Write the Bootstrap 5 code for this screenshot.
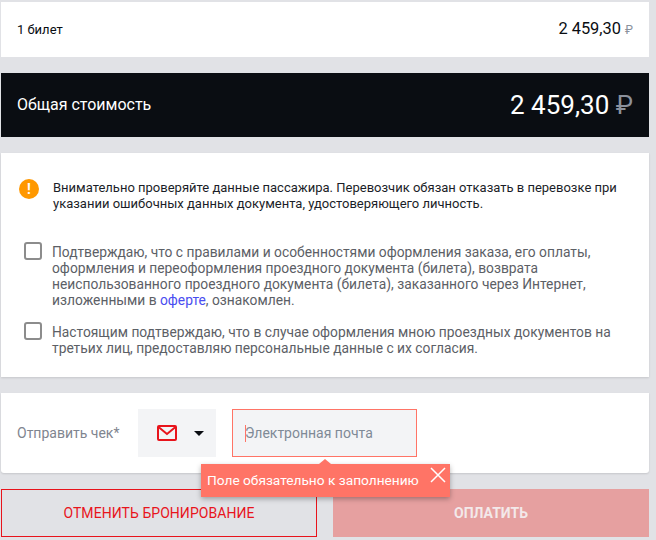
<!DOCTYPE html>
<html lang="ru"><head><meta charset="utf-8">
<link href="https://cdn.jsdelivr.net/npm/bootstrap@5.3.0/dist/css/bootstrap.min.css" rel="stylesheet">
<style>
html,body{height:100%;overflow:hidden}
body{background:#e1e2e6;font-family:Roboto,"Liberation Sans",sans-serif;color:#0a0d12;font-size:13px;width:656px}
.page-wrap{padding:2px 7px 0 1px}
.panel-w{background:#fff;box-shadow:0 1px 2px rgba(0,0,0,.12)}
.row-ticket{height:55px;padding:0 16px;margin-bottom:16px;box-shadow:none}
.ticket-lbl{font-size:13px}
.ticket-sum{font-size:16.400px;font-weight:400}
.rub-s{font-size:12px;color:#8b919c;font-weight:400}
.row-total{height:64px;padding:0 16px;margin-bottom:16px;background:#0a0d12;color:#fff}
.total-lbl{font-size:16px;font-weight:400}
.total-sum{font-size:26px;font-weight:400}
.rub-l{color:#8b919c}
.panel-notes{height:224px;padding:27px 16px 0 16px;margin-bottom:16px}
.warn-dot{width:20px;height:20px;border-radius:50%;background:#ff9800;color:#fff;font-size:14px;font-weight:700;line-height:20px;text-align:center;flex:none;margin:-1px 14px 0 2px}
.warn-text{font-size:13px;line-height:16px;color:#1b1e28}
.check-row{color:#5c6066;font-size:13.800px;line-height:16px}
.check-box{width:18px;height:18px;border:2px solid #8c8c8c;border-radius:3px;flex:none;margin:-2px 10px 0 7px;background:#fff}
.check-row a{color:#4a4df0;text-decoration:none}
.first-check{margin-top:32px;margin-bottom:16px}
.panel-receipt{height:80px;padding:16px;margin-bottom:16px;border-radius:0 0 3px 3px}
.receipt-lbl{font-size:14px;color:#7f858f;width:121px}
.channel-pick{width:78px;height:48px;background:#f3f4f6;padding-left:19px;gap:17px;margin-right:16px}
.caret-d{width:0;height:0;border-left:5px solid transparent;border-right:5px solid transparent;border-top:5px solid #0a0d12}
.mail-field{width:185px;height:48px;background:#f3f4f6;border:1px solid #ff7466;position:relative;padding-left:12px;font-size:14px;color:#7f8a96}
.mail-cursor{width:1px;height:17px;background:#ff7466;margin-right:-1px}
.tip-box{position:absolute;left:-32px;top:54px;width:249px;height:33px;background:#ff7466;color:#fff;font-size:13.700px;padding-left:6px;box-shadow:0 2px 5px rgba(0,0,0,.3);z-index:2}
.tip-box::before{content:"";position:absolute;left:118px;top:-5px;border-left:6px solid transparent;border-right:6px solid transparent;border-bottom:5px solid #ff7466}
.tip-x{position:absolute;right:4px;top:3px;width:16px;height:16px}
.btn-row{gap:16px}
.btn-cancel,.btn-pay{height:48px;width:316px;font-size:14px;font-weight:400;border-radius:0;display:flex;align-items:center;justify-content:center;padding:0}
.btn-cancel{color:#e8141c;border:1px solid #e8141c;background:transparent;letter-spacing:.05px}
.btn-pay{background:#e6a0a0;color:#f3e9ea;border:0;font-weight:700}
</style></head><body>
<div class="page-wrap">
<div class="panel-w row-ticket d-flex justify-content-between align-items-center"><span class="ticket-lbl">1 билет</span><span class="ticket-sum">2 459,30 <span class="rub-s">₽</span></span></div>
<div class="row-total d-flex justify-content-between align-items-center"><span class="total-lbl">Общая стоимость</span><span class="total-sum">2 459,30 <span class="rub-l">₽</span></span></div>
<div class="panel-w panel-notes">
<div class="d-flex"><div class="warn-dot">!</div><div class="warn-text">Внимательно проверяйте данные пассажира. Перевозчик обязан отказать в перевозке при указании ошибочных данных документа, удостоверяющего личность.</div></div>
<div class="d-flex check-row first-check"><div class="check-box"></div><div>Подтверждаю, что с правилами и особенностями оформления заказа, его оплаты, оформления и переоформления проездного документа (билета), возврата неиспользованного проездного документа (билета), заказанного через Интернет, изложенными в <a href="#">оферте</a>, ознакомлен.</div></div>
<div class="d-flex check-row"><div class="check-box"></div><div>Настоящим подтверждаю, что в случае оформления мною проездных документов на третьих лиц, предоставляю персональные данные с их согласия.</div></div>
</div>
<div class="panel-w panel-receipt d-flex align-items-center">
<div class="receipt-lbl">Отправить чек*</div>
<div class="channel-pick d-flex align-items-center"><svg width="20" height="16" viewBox="0 0 20 16"><rect x="1" y="1" width="18" height="14" rx="1" fill="none" stroke="#e8141c" stroke-width="2"/><path d="M1.500 2 10 9l8.500-7" fill="none" stroke="#e8141c" stroke-width="2"/></svg><span class="caret-d"></span></div>
<div class="mail-field d-flex align-items-center"><span class="mail-cursor"></span>Электронная почта
<div class="tip-box d-flex align-items-center">Поле обязательно к заполнению<svg class="tip-x" viewBox="0 0 16 16"><path d="M1 1l14 14M15 1 1 15" stroke="#fff" stroke-width="1.500"/></svg></div></div>
</div>
<div class="d-flex btn-row"><button class="btn btn-cancel">ОТМЕНИТЬ БРОНИРОВАНИЕ</button><button class="btn btn-pay">ОПЛАТИТЬ</button></div>
</div>
<script src="https://cdn.jsdelivr.net/npm/bootstrap@5.3.0/dist/js/bootstrap.bundle.min.js"></script>
</body></html>
